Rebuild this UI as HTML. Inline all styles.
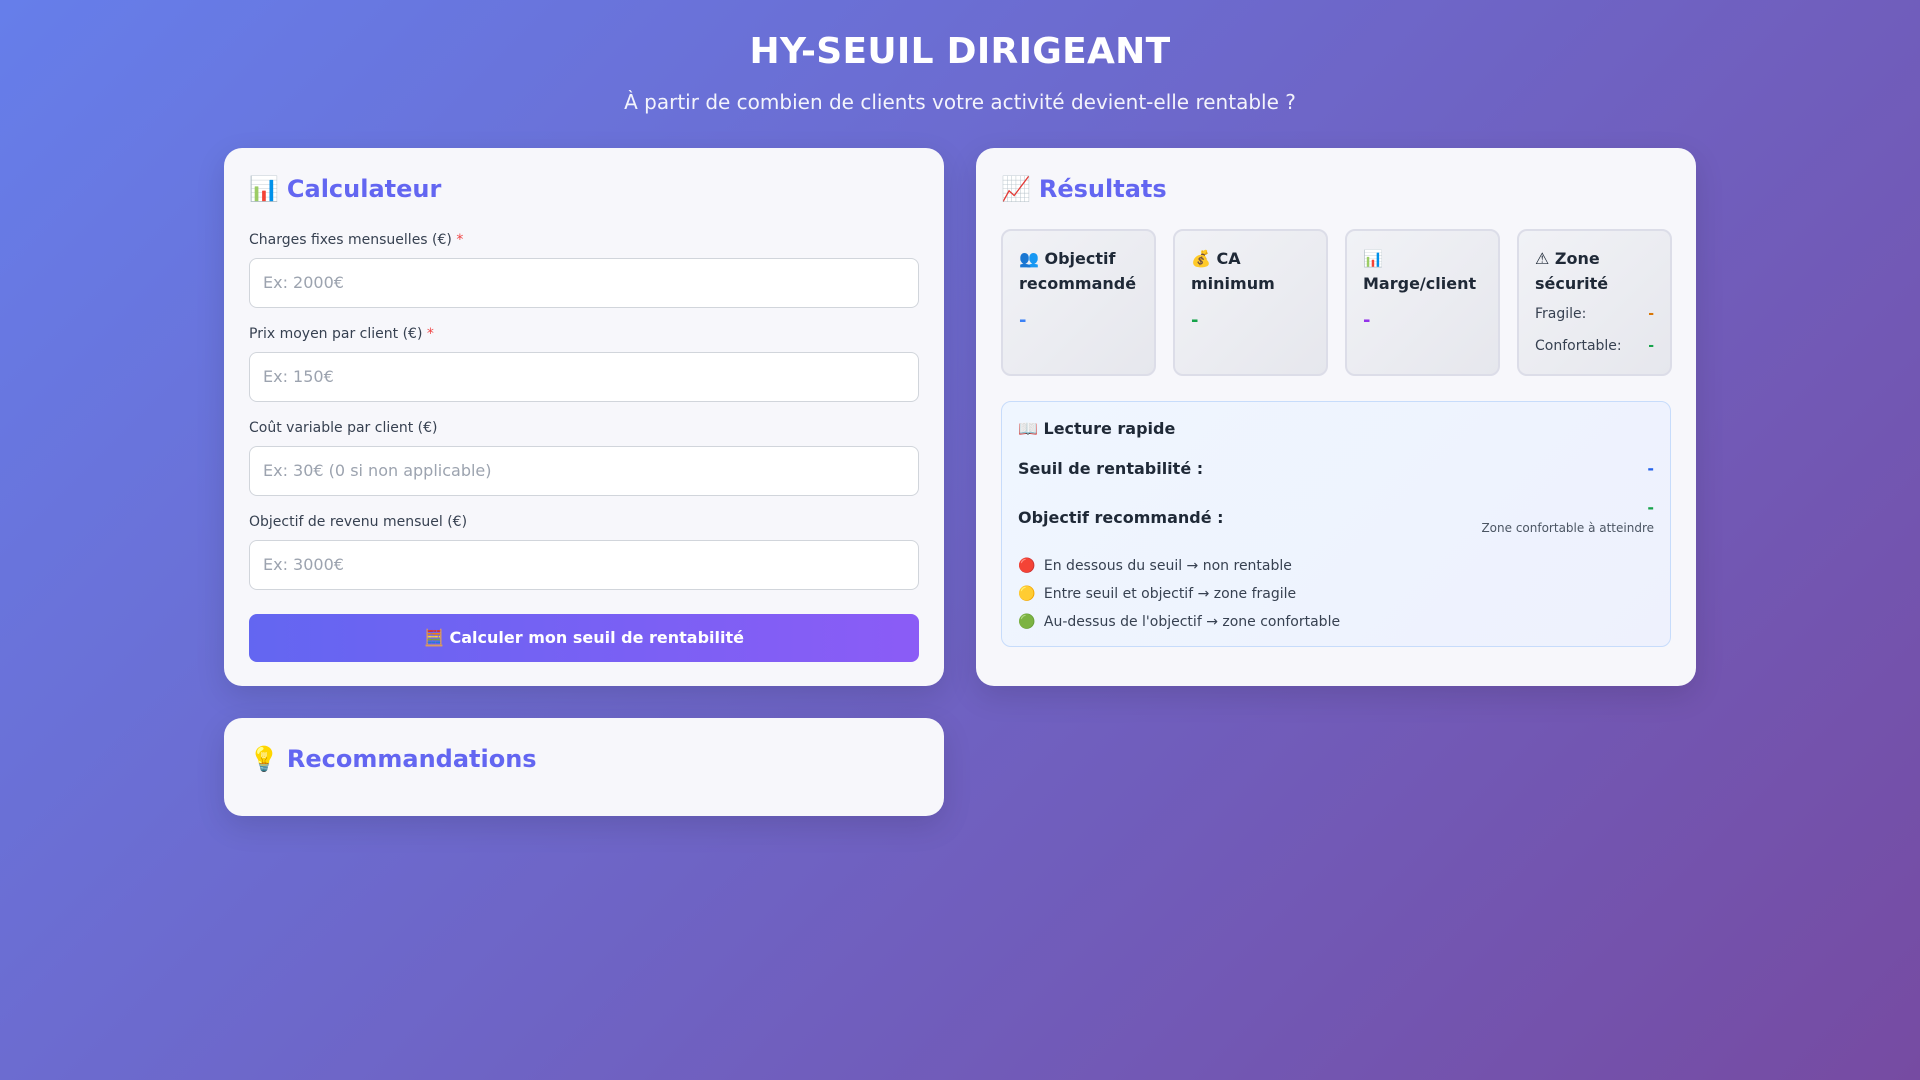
<!DOCTYPE html>
<html><head><meta charset="utf-8"><style>
*{box-sizing:border-box;margin:0;padding:0}
body{width:1920px;height:1080px;overflow:hidden;font-family:"DejaVu Sans","Liberation Sans","Noto Sans CJK JP",sans-serif;background:linear-gradient(135deg,#667eea 0%,#764ba2 100%);color:#1f2937}
h1{position:absolute;top:31px;left:0;width:1920px;text-align:center;color:#fff;font-size:36px;font-weight:bold;letter-spacing:0.3px}
.sub{position:absolute;top:90px;left:0;width:1920px;text-align:center;color:rgba(255,255,255,.92);font-size:20px}
.card{position:absolute;background:#f7f7fb;border-radius:18px;box-shadow:0 10px 30px rgba(0,0,0,.12);padding:25px}
h2{font-size:24px;font-weight:bold;color:#6366f1;height:28px;line-height:28px;margin-top:2px}
h2 .e{font-size:24px;margin-right:8px}
label{display:block;font-size:14px;color:#374151;height:17px;line-height:17px}
label .r{color:#ef4444}
.in{margin-top:9px;height:50px;border:1px solid #d1d5db;border-radius:8px;background:#fff;padding-left:13px;line-height:48px;font-size:16px;color:#9ca3af}
.fg{margin-bottom:18px}
.btn{height:48px;border-radius:8px;background:linear-gradient(90deg,#6366f1,#8b5cf6);color:#fff;font-weight:bold;font-size:16px;text-align:center;line-height:48px}
.stat{position:absolute;top:81px;width:155px;height:147px;border:2px solid #dcdde8;border-radius:10px;background:linear-gradient(135deg,#f1f2f6,#e6e7ed);padding:15px 16px;font-size:16px;font-weight:bold;line-height:25px}
.v{font-weight:bold;font-size:18px;margin-top:12px}
.zr{display:flex;justify-content:space-between;font-size:14px;font-weight:normal;color:#374151;line-height:20px;margin-top:8px}
.lr{position:absolute;left:25px;top:253px;width:670px;height:246px;border:1.5px solid #c7dcfb;border-radius:10px;background:linear-gradient(135deg,#eff6ff,#eef1fd);padding:17px 16px}
.row{display:flex;justify-content:space-between;font-weight:bold;font-size:16px}
.leg{font-size:14px;color:#374151;height:28px;line-height:28px}
.leg b{font-weight:normal;margin-right:4px}
</style></head><body>
<h1>HY-SEUIL DIRIGEANT</h1>
<div class="sub">À partir de combien de clients votre activité devient-elle rentable ?</div>

<div class="card" style="left:224px;top:148px;width:720px;height:538px">
<h2><span class="e">📊</span>Calculateur</h2>
<div style="margin-top:29px">
<div class="fg"><label>Charges fixes mensuelles (€) <span class="r">*</span></label><div class="in">Ex: 2000€</div></div>
<div class="fg"><label>Prix moyen par client (€) <span class="r">*</span></label><div class="in">Ex: 150€</div></div>
<div class="fg"><label>Coût variable par client (€)</label><div class="in">Ex: 30€ (0 si non applicable)</div></div>
<div class="fg" style="margin-bottom:24px"><label>Objectif de revenu mensuel (€)</label><div class="in">Ex: 3000€</div></div>
<div class="btn">🧮 Calculer mon seuil de rentabilité</div>
</div>
</div>

<div class="card" style="left:976px;top:148px;width:720px;height:538px">
<h2><span class="e">📈</span>Résultats</h2>
<div class="stat" style="left:25px">👥 Objectif recommandé<div class="v" style="color:#3b82f6">-</div></div>
<div class="stat" style="left:197px">💰 CA minimum<div class="v" style="color:#16a34a">-</div></div>
<div class="stat" style="left:369px">📊<br>Marge/client<div class="v" style="color:#9333ea">-</div></div>
<div class="stat" style="left:541px">⚠ Zone sécurité
<div class="zr"><span>Fragile:</span><span style="color:#d97706;font-weight:bold">-</span></div>
<div class="zr" style="margin-top:12px"><span>Confortable:</span><span style="color:#16a34a;font-weight:bold">-</span></div></div>
<div class="lr">
<div style="font-weight:bold;font-size:16px;line-height:20px">📖 Lecture rapide</div>
<div class="row" style="margin-top:20px"><span>Seuil de rentabilité :</span><span style="color:#2563eb">-</span></div>
<div class="row" style="margin-top:20px;align-items:center"><span>Objectif recommandé :</span><span style="text-align:right"><span style="color:#16a34a;display:block">-</span><span style="font-size:12px;font-weight:normal;color:#4b5563">Zone confortable à atteindre</span></span></div>
<div style="margin-top:16px">
<div class="leg"><b>🔴</b> En dessous du seuil → non rentable</div>
<div class="leg"><b>🟡</b> Entre seuil et objectif → zone fragile</div>
<div class="leg"><b>🟢</b> Au-dessus de l'objectif → zone confortable</div>
</div>
</div>
</div>

<div class="card" style="left:224px;top:718px;width:720px;height:98px">
<h2><span class="e">💡</span>Recommandations</h2>
</div>
</body></html>
